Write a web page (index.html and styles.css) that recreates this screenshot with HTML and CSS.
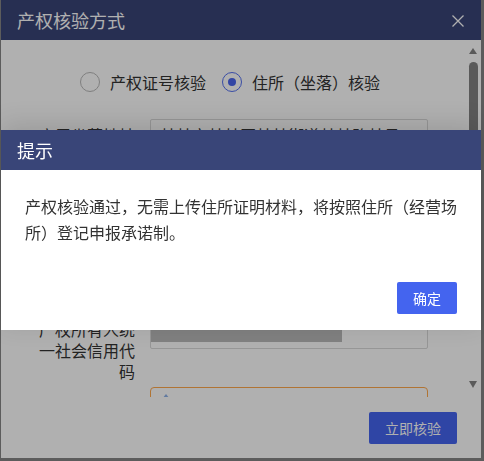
FILE: index.html
```html
<!DOCTYPE html>
<html lang="zh-CN">
<head>
<meta charset="utf-8">
<title>产权核验方式</title>
<link rel="stylesheet" href="styles.css">
</head>
<body>
<div class="page">
  <section class="dialog">
    <header class="dialog-head">
      <h1 class="dialog-title">产权核验方式</h1>
      <span class="close" aria-label="关闭">
        <svg width="12" height="12" viewBox="0 0 12 12"><path d="M0.5 0.5 L11.5 11.5 M11.5 0.5 L0.5 11.5" stroke="#ffffff" stroke-width="1.3" fill="none"/></svg>
      </span>
    </header>
    <div class="dialog-body">
      <div class="scroll">
        <div class="radios">
          <label class="radio"><span class="dot"></span>产权证号核验</label>
          <label class="radio checked"><span class="dot"></span>住所（坐落）核验</label>
        </div>
        <div class="form">
          <div class="row">
            <div class="label single first">房屋坐落地址</div>
            <div class="input first">某某市某某区某某街道某某路某号</div>
          </div>
          <div class="row">
            <div class="label single"></div>
            <div class="input"></div>
          </div>
          <div class="row">
            <div class="label single"></div>
            <div class="input"></div>
          </div>
          <div class="row">
            <div class="label single"></div>
            <div class="input"></div>
          </div>
          <div class="row tall">
            <div class="label">产权所有人统一社会信用代码</div>
            <div class="input"><span class="masked"></span></div>
          </div>
          <div class="row">
            <div class="label"></div>
            <div class="upload">
              <svg class="up-icon" width="8" height="6" viewBox="0 0 8 6"><path d="M4 0 L8 5 L0 5 Z" fill="#8fb3e8"/></svg>
            </div>
          </div>
        </div>
      </div>
      <div class="scrollbar">
        <span class="arrow up"></span>
        <span class="thumb"></span>
        <span class="track"></span>
        <span class="arrow down"></span>
      </div>
    </div>
    <footer class="dialog-foot">
      <button class="btn">立即核验</button>
    </footer>
  </section>
</div>
<div class="mask"></div>
<section class="alert">
  <header class="alert-head">
    <h2 class="alert-title">提示</h2>
  </header>
  <div class="alert-body">
    <p class="alert-text">产权核验通过，无需上传住所证明材料，将按照住所（经营场所）登记申报承诺制。</p>
  </div>
  <footer class="alert-foot">
    <button class="btn btn-sm">确定</button>
  </footer>
</section>
</body>
</html>
```

FILE: styles.css
```css
* { box-sizing: border-box; }
html, body { margin: 0; padding: 0; }
body {
  width: 484px;
  height: 461px;
  overflow: hidden;
  background: #868686;
  font-family: "Noto Sans CJK SC", "Microsoft YaHei", sans-serif;
  color: #333;
}
.page { padding-left: 1px; }

.dialog {
  width: 480px;
  height: 458px;
  background: #fff;
  display: flex;
  flex-direction: column;
}
.dialog-head {
  height: 40px;
  flex: none;
  background: #394578;
  display: flex;
  align-items: center;
  justify-content: space-between;
  padding: 0 17px 0 16px;
}
.dialog-title {
  margin: 0;
  font-size: 18px;
  font-weight: normal;
  line-height: 24px;
  color: #fff;
}
.close { display: flex; width: 12px; height: 12px; margin-top: 1px; }

.dialog-body {
  height: 357px;
  flex: none;
  display: flex;
  overflow: hidden;
}
.scroll { flex: 1; overflow: hidden; padding-top: 32px; }

.radios {
  display: flex;
  align-items: center;
  padding-left: 79px;
  gap: 16px;
  height: 20px;
}
.radio {
  display: flex;
  align-items: center;
  gap: 10px;
  font-size: 16px;
  line-height: 20px;
  color: #333;
}
.dot {
  width: 20px;
  height: 20px;
  border-radius: 50%;
  border: 1.5px solid #b8b8b8;
  display: flex;
  align-items: center;
  justify-content: center;
}
.checked .dot { border-color: #5470f0; }
.checked .dot::after {
  content: "";
  width: 8px;
  height: 8px;
  border-radius: 50%;
  background: #4a66ee;
}

.form { margin-top: 27px; padding-left: 38px; }
.row { display: flex; align-items: flex-start; gap: 15px; margin-bottom: 20px; height: 30px; }
.row.tall { margin-bottom: 5px; height: auto; }
.label {
  width: 96px;
  flex: none;
  text-align: right;
  font-size: 16px;
  line-height: 21px;
  color: #333;
}
.label.single { line-height: 30px; white-space: nowrap; }
.label.first { padding-top: 1px; }
.input {
  width: 278px;
  height: 30px;
  border: 1px solid #d9d9d9;
  border-radius: 2px;
  padding: 1px 9px 0;
  font-size: 16px;
  line-height: 26px;
  color: #333;
  white-space: nowrap;
  overflow: hidden;
}
.input.first { padding-top: 2px; }
.row.tall .input { padding: 2px 0 0 0; }
.masked { display: block; width: 191px; height: 20px; background: #bababa; }
.upload {
  width: 278px;
  height: 110px;
  border: 1px solid #ffa84c;
  border-radius: 4px;
  padding: 6px 0 0 11px;
}
.up-icon { display: block; }

.scrollbar {
  width: 16px;
  flex: none;
  display: flex;
  flex-direction: column;
  align-items: center;
  padding: 8px 0 9px;
}
.arrow { width: 0; height: 0; border-left: 4.5px solid transparent; border-right: 4.5px solid transparent; }
.arrow.up { border-bottom: 6px solid #838383; }
.arrow.down { border-top: 7px solid #838383; }
.thumb {
  width: 9px;
  height: 250px;
  margin-top: 8px;
  border-radius: 4.5px 4.5px 0 0;
  background: #838383;
}
.track { flex: 1; }

.dialog-foot {
  flex: 1;
  display: flex;
  justify-content: flex-end;
  align-items: flex-start;
  padding: 15px 24px 0 0;
}
.btn {
  height: 32px;
  padding: 0 16px;
  border: none;
  border-radius: 2px;
  background: #4464ef;
  color: #fff;
  font-family: inherit;
  font-size: 14px;
  line-height: 32px;
}
.btn-sm { width: 60px; padding: 0; }

.mask {
  position: fixed;
  inset: 0;
  background: rgba(0, 0, 0, 0.31);
}

.alert {
  position: absolute;
  top: 130px;
  left: 1px;
  width: 480px;
  height: 200px;
  background: #fff;
  display: flex;
  flex-direction: column;
  box-shadow: 0 -6px 24px rgba(0, 0, 0, 0.12);
}
.alert-head {
  height: 40px;
  flex: none;
  background: #394578;
  display: flex;
  align-items: center;
  padding-left: 16px;
}
.alert-title {
  margin: 0;
  font-size: 18px;
  font-weight: normal;
  line-height: 24px;
  color: #fff;
}
.alert-body { flex: 1; padding: 23px 22px 0 24px; }
.alert-text { margin: 0; font-size: 16px; line-height: 26px; color: #333; }
.alert-foot {
  display: flex;
  justify-content: flex-end;
  padding: 0 24px 16px 0;
}
```
